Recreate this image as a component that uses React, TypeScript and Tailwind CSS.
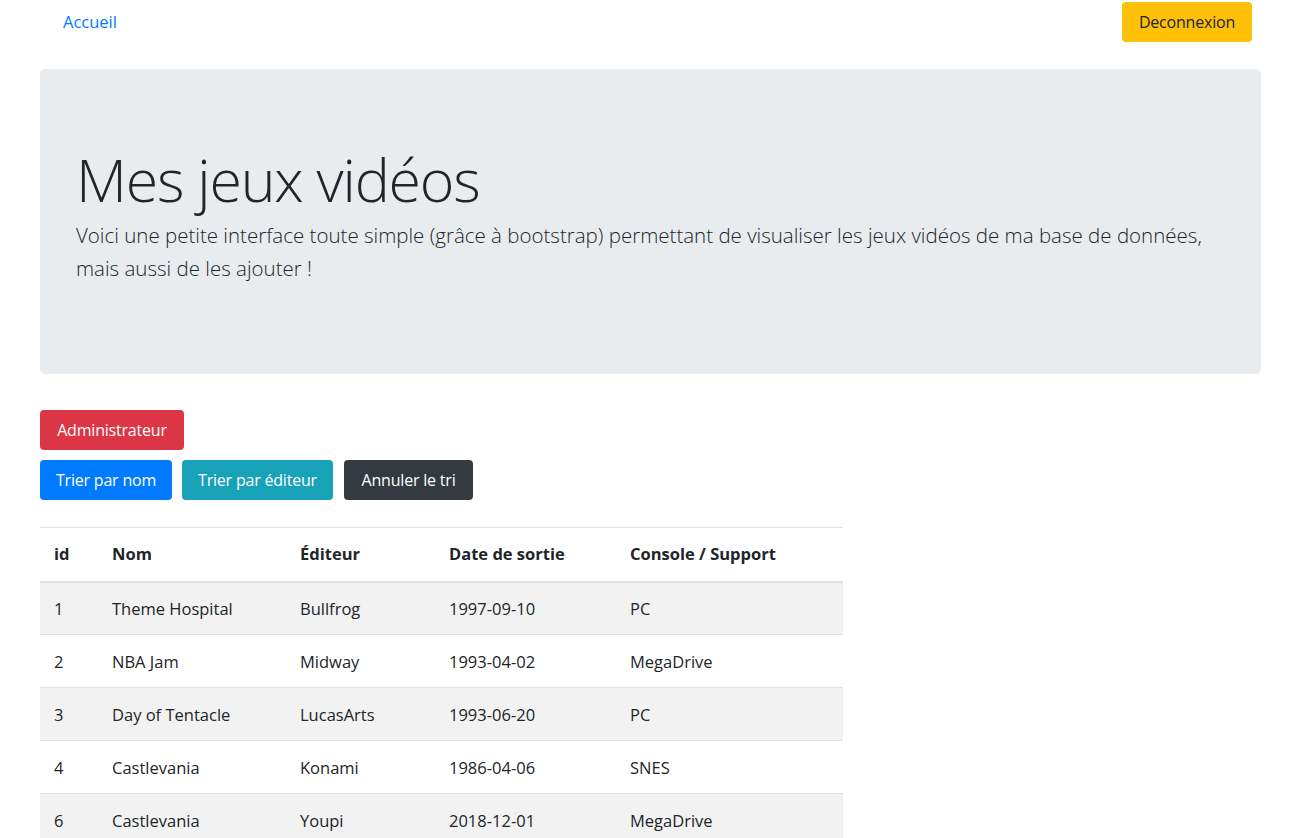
const games = [
  { id: 1, nom: 'Theme Hospital', editeur: 'Bullfrog', date: '1997-09-10', console: 'PC' },
  { id: 2, nom: 'NBA Jam', editeur: 'Midway', date: '1993-04-02', console: 'MegaDrive' },
  { id: 3, nom: 'Day of Tentacle', editeur: 'LucasArts', date: '1993-06-20', console: 'PC' },
  { id: 4, nom: 'Castlevania', editeur: 'Konami', date: '1986-04-06', console: 'SNES' },
  { id: 6, nom: 'Castlevania', editeur: 'Youpi', date: '2018-12-01', console: 'MegaDrive' },
]

function Btn({ className, children }: { className: string; children: React.ReactNode }) {
  return (
    <button className={`h-10 rounded-[4px] text-[16px] leading-none whitespace-nowrap tracking-[-0.2px] ${className}`}>
      {children}
    </button>
  )
}

export default function App() {
  return (
    <div className="min-h-screen bg-white text-[#212529] font-['Open_Sans',sans-serif] text-[16.5px]">
      {/* Navbar */}
      <nav className="flex items-center justify-between pl-[63px] pr-[54px] pt-px h-[43px]">
        <a className="text-[#007bff] text-[16.5px]">Accueil</a>
        <Btn className="w-[130px] bg-[#ffc107] text-[#212529]">Deconnexion</Btn>
      </nav>

      <div className="pl-10 pr-[45px] pt-[26px]">
        {/* Jumbotron */}
        <div className="bg-[#e9ecef] rounded-[5px] h-[305px] px-9 pt-[75px]">
          <h1 className="text-[59px] font-light leading-[1.2] tracking-[-1.2px]">Mes jeux vidéos</h1>
          <p className="text-[20.5px] font-light leading-[33px] mt-[4px]">
            Voici une petite interface toute simple (grâce à bootstrap) permettant de visualiser les jeux vidéos de ma base de données, mais aussi de les ajouter !
          </p>
        </div>

        {/* Actions */}
        <div className="mt-9 flex flex-col gap-[10px]">
          <div>
            <Btn className="w-[144px] bg-[#dc3545] text-white">Administrateur</Btn>
          </div>
          <div className="flex gap-[10px]">
            <Btn className="w-[132px] bg-[#007bff] text-white">Trier par nom</Btn>
            <Btn className="w-[151px] bg-[#17a2b8] text-white">Trier par éditeur</Btn>
            <Btn className="w-[129px] ml-px bg-[#343a40] text-white">Annuler le tri</Btn>
          </div>
        </div>

        {/* Table */}
        <table className="mt-[27px] w-[803px] border-collapse text-left">
          <thead>
            <tr className="h-[54px] border-t border-[#dee2e6] border-b-2">
              <th className="w-[59px] pl-[14px] font-bold">id</th>
              <th className="w-[188px] pl-[13px] font-bold">Nom</th>
              <th className="w-[149px] pl-[13px] font-bold">Éditeur</th>
              <th className="w-[181px] pl-[13px] font-bold">Date de sortie</th>
              <th className="pl-[13px] font-bold">Console / Support</th>
            </tr>
          </thead>
          <tbody>
            {games.map((g, i) => (
              <tr
                key={i}
                className={`h-[53px] border-t border-[#dee2e6] ${i % 2 === 0 ? 'bg-[#f2f2f2]' : 'bg-white'}`}
              >
                <td className="pl-[14px] pt-[2px]">{g.id}</td>
                <td className="pl-[13px] pt-[2px]">{g.nom}</td>
                <td className="pl-[13px] pt-[2px]">{g.editeur}</td>
                <td className="pl-[13px] pt-[2px]">{g.date}</td>
                <td className="pl-[13px] pt-[2px]">{g.console}</td>
              </tr>
            ))}
          </tbody>
        </table>
      </div>
    </div>
  )
}
